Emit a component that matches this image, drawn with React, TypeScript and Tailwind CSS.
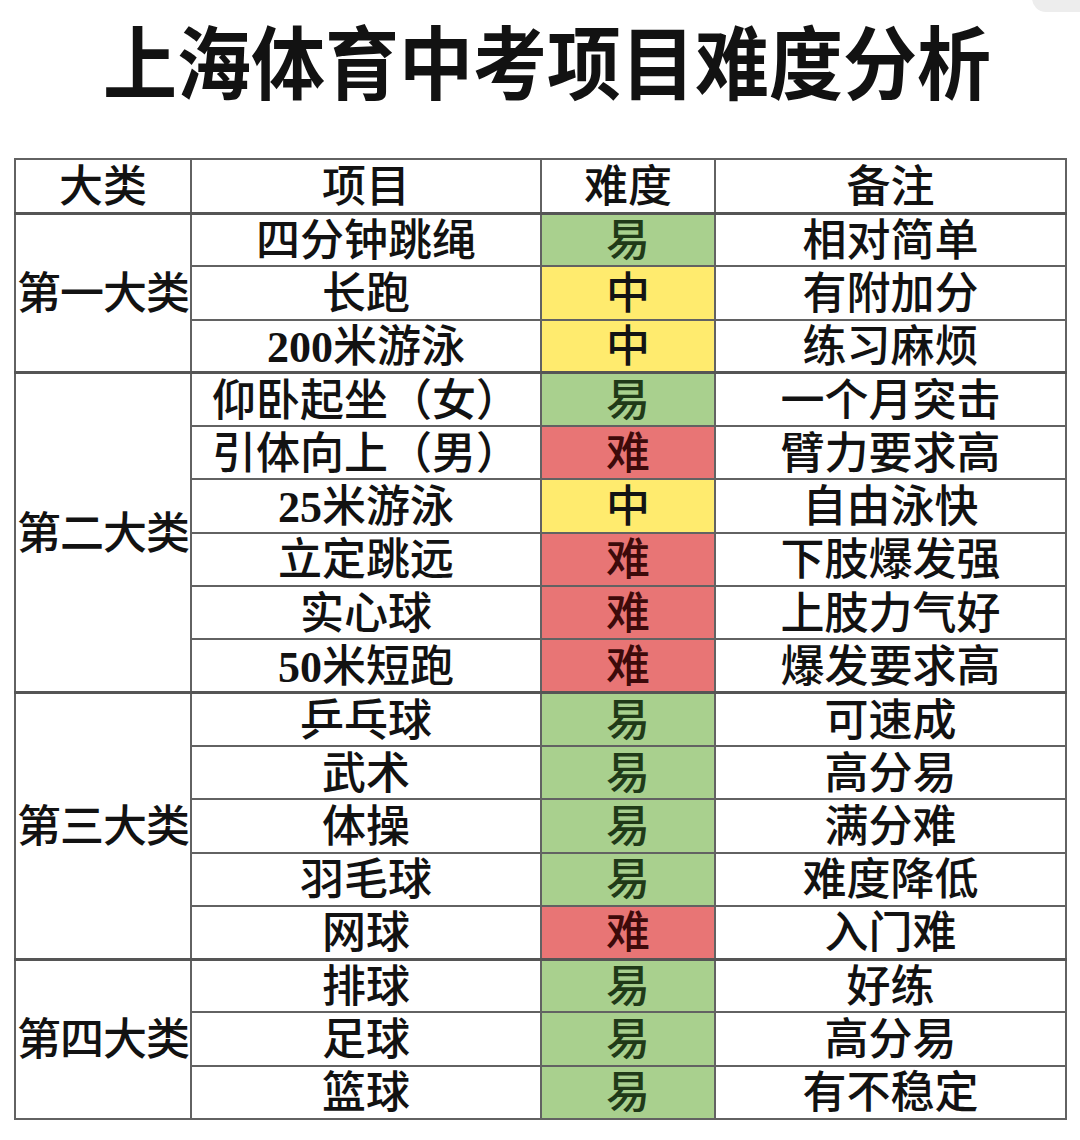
import React from "react";

type Level = "易" | "中" | "难";

type Item = { name: string; level: Level; note: string };

type Group = { title: string; items: Item[] };

const groups: Group[] = [
  {
    title: "第一大类",
    items: [
      { name: "四分钟跳绳", level: "易", note: "相对简单" },
      { name: "长跑", level: "中", note: "有附加分" },
      { name: "200米游泳", level: "中", note: "练习麻烦" },
    ],
  },
  {
    title: "第二大类",
    items: [
      { name: "仰卧起坐（女）", level: "易", note: "一个月突击" },
      { name: "引体向上（男）", level: "难", note: "臂力要求高" },
      { name: "25米游泳", level: "中", note: "自由泳快" },
      { name: "立定跳远", level: "难", note: "下肢爆发强" },
      { name: "实心球", level: "难", note: "上肢力气好" },
      { name: "50米短跑", level: "难", note: "爆发要求高" },
    ],
  },
  {
    title: "第三大类",
    items: [
      { name: "乒乓球", level: "易", note: "可速成" },
      { name: "武术", level: "易", note: "高分易" },
      { name: "体操", level: "易", note: "满分难" },
      { name: "羽毛球", level: "易", note: "难度降低" },
      { name: "网球", level: "难", note: "入门难" },
    ],
  },
  {
    title: "第四大类",
    items: [
      { name: "排球", level: "易", note: "好练" },
      { name: "足球", level: "易", note: "高分易" },
      { name: "篮球", level: "易", note: "有不稳定" },
    ],
  },
];

const levelCls: Record<Level, string> = {
  易: "bg-[#a9d08e] text-[#203a18]",
  中: "bg-[#ffeb6e] text-[#141414]",
  难: "bg-[#e87575] text-[#3d0a0a]",
};

const cell = "border-2 border-[#626262] text-center align-middle p-0 pt-[4px] leading-none";

// digits in the source are a bold serif, the CJK part a medium sans
function Name({ text }: { text: string }) {
  const m = text.match(/^(\d+)(.*)$/);
  if (!m) return <>{text}</>;
  return (
    <>
      <span className="font-bold">{m[1]}</span>
      {m[2]}
    </>
  );
}

export default function App() {
  return (
    <div className="relative w-[1080px] h-[1140px] bg-white text-[#121212] overflow-hidden font-['Liberation_Serif','Noto_Sans_CJK_SC',serif]">
      {/* viewer artifact top right */}
      <div className="absolute -top-4 right-[-20px] w-[68px] h-[28px] rounded-full bg-[#ededed]" />

      <h1 className="pt-[21px] h-[158px] text-center font-bold font-['Noto_Sans_CJK_SC',sans-serif] pl-[14px]">
        <span className="inline-block text-[74px] leading-[74px] scale-y-[1.08]">上海体育中考项目难度分析</span>
      </h1>

      <table className="ml-[14px] w-[1051px] border-collapse table-fixed text-[44px] font-medium">
        <colgroup>
          <col className="w-[176px]" />
          <col className="w-[350px]" />
          <col className="w-[174px]" />
          <col className="w-[351px]" />
        </colgroup>
        <thead>
          <tr className="h-[54px]">
            <th className={`${cell} font-medium`}>大类</th>
            <th className={`${cell} font-medium`}>项目</th>
            <th className={`${cell} font-medium`}>难度</th>
            <th className={`${cell} font-medium`}>备注</th>
          </tr>
        </thead>
        {groups.map((g) => (
          <tbody key={g.title} className="border-t-[3px] border-[#555]">
            {g.items.map((it, i) => (
              <tr key={it.name} className="h-[53.3px]">
                {i === 0 && (
                  <td rowSpan={g.items.length} className={`${cell} whitespace-nowrap tracking-[-1px]`}>
                    {g.title}
                  </td>
                )}
                <td className={`${cell} whitespace-nowrap`}>
                  <Name text={it.name} />
                </td>
                <td className={`${cell} ${levelCls[it.level]}`}>{it.level}</td>
                <td className={`${cell} whitespace-nowrap`}>{it.note}</td>
              </tr>
            ))}
          </tbody>
        ))}
      </table>
    </div>
  );
}
